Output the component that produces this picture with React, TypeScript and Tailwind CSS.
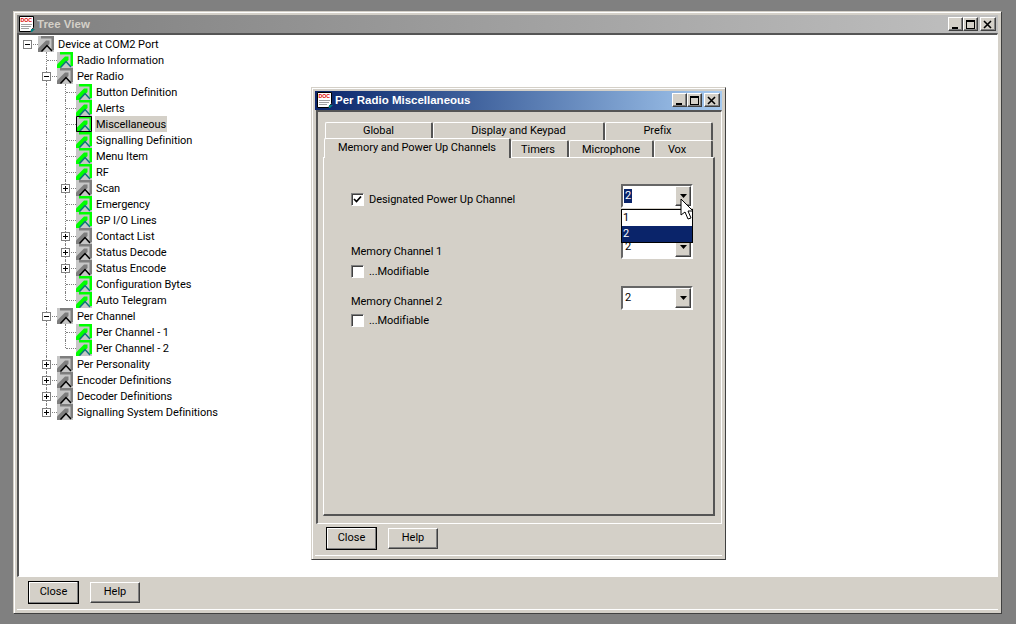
import type { ReactNode } from "react";

type Node = {
  label: string;
  depth: number;
  green?: boolean;
  toggle?: "+" | "-";
  selected?: boolean;
  // which levels keep a dotted line running through this row
  pipes?: number[];
  last?: boolean;
};

const R = [1];
const RR = [1, 2];

const TREE: Node[] = [
  { label: "Device at COM2 Port", depth: 0, toggle: "-" },
  { label: "Radio Information", depth: 1, green: true, pipes: R },
  { label: "Per Radio", depth: 1, toggle: "-", pipes: R },
  { label: "Button Definition", depth: 2, green: true, pipes: RR },
  { label: "Alerts", depth: 2, green: true, pipes: RR },
  { label: "Miscellaneous", depth: 2, green: true, selected: true, pipes: RR },
  { label: "Signalling Definition", depth: 2, green: true, pipes: RR },
  { label: "Menu Item", depth: 2, green: true, pipes: RR },
  { label: "RF", depth: 2, green: true, pipes: RR },
  { label: "Scan", depth: 2, toggle: "+", pipes: RR },
  { label: "Emergency", depth: 2, green: true, pipes: RR },
  { label: "GP I/O Lines", depth: 2, green: true, pipes: RR },
  { label: "Contact List", depth: 2, toggle: "+", pipes: RR },
  { label: "Status Decode", depth: 2, toggle: "+", pipes: RR },
  { label: "Status Encode", depth: 2, toggle: "+", pipes: RR },
  { label: "Configuration Bytes", depth: 2, green: true, pipes: RR },
  { label: "Auto Telegram", depth: 2, green: true, pipes: R, last: true },
  { label: "Per Channel", depth: 1, toggle: "-", pipes: R },
  { label: "Per Channel - 1", depth: 2, green: true, pipes: RR },
  { label: "Per Channel - 2", depth: 2, green: true, pipes: R, last: true },
  { label: "Per Personality", depth: 1, toggle: "+", pipes: R },
  { label: "Encoder Definitions", depth: 1, toggle: "+", pipes: R },
  { label: "Decoder Definitions", depth: 1, toggle: "+", pipes: R },
  { label: "Signalling System Definitions", depth: 1, toggle: "+", last: true },
];

function NodeIcon({ green, boxed }: { green?: boolean; boxed?: boolean }) {
  const band = green ? "#00ff00" : "#7e7e7e";
  return (
    <svg width="16" height="16" viewBox="0 0 16 16" className="block shrink-0">
      <path d="M0 0h16v16H0z" fill="#c6c6c6" />
      <path d="M3 0h13v14h-2.5V2.5H3z" fill={band} />
      <path d="M0 16v-3.5L8 4.5h3.5V8L3.5 16z" fill={band} />
      <path d="M3.5 15.5L9 9.5l5 5.5" fill="none" stroke={green ? "#107080" : "#000"} strokeWidth="1.5" />
      {boxed && <path d="M.5.5h15v15H.5z" fill="none" stroke="#000" />}
    </svg>
  );
}

function Expander({ sign }: { sign: "+" | "-" }) {
  return (
    <span className="absolute left-[4px] top-[4px] flex h-[9px] w-[9px] items-center justify-center border border-[#808080] bg-white">
      <span className="relative block h-[5px] w-[5px]">
        <span className="absolute left-0 top-[2px] h-px w-[5px] bg-black" />
        {sign === "+" && <span className="absolute left-[2px] top-0 h-[5px] w-px bg-black" />}
      </span>
    </span>
  );
}

function TreeRow({ node }: { node: Node }) {
  const { depth, pipes = [], last, toggle } = node;
  return (
    <div className="flex h-4 items-center">
      {[0, 1, 2].slice(0, depth + 1).map((level) => {
        const isOwn = level === depth;
        const through = pipes.includes(level) && !isOwn;
        const ownLine = isOwn && depth > 0;
        return (
          <div key={level} className="relative h-4 w-[19px] shrink-0">
            {through && <span className="absolute bottom-0 left-[8px] top-0 border-l border-dotted border-[#808080]" />}
            {ownLine && (
              <span
                className={`absolute left-[8px] top-0 border-l border-dotted border-[#808080] ${
                  last ? "h-[8px]" : "h-4"
                }`}
              />
            )}
            {isOwn && (
              <span className="absolute left-[9px] top-[8px] w-[10px] border-t border-dotted border-[#808080]" />
            )}
            {isOwn && toggle && <Expander sign={toggle} />}
          </div>
        );
      })}
      <NodeIcon green={node.green} boxed={node.selected} />
      <span
        className={`ml-[3px] h-4 px-px leading-[18px] tracking-[-0.05px] whitespace-nowrap ${
          node.selected ? "bg-[#d4d0c8]" : ""
        }`}
      >
        {node.label}
      </span>
    </div>
  );
}

function DocIcon() {
  return (
    <svg width="16" height="17" viewBox="0 0 16 17" className="block shrink-0">
      <path d="M.5.5h14v11l-3 4H.5z" fill="#fff" stroke="#000" />
      <text x="1.5" y="6" fontSize="5.2" fontWeight="700" fill="#e00000" fontFamily="Liberation Sans">
        DOC
      </text>
      <path d="M2 8.5h11M2 10.5h10M2 12.5h8" stroke="#a0a0a0" />
      <path d="M12 13h3.5v1h-1v1h-1v1H12z" fill="#008080" />
    </svg>
  );
}

function CaptionButton({ kind }: { kind: "min" | "max" | "close" }) {
  return (
    <span
      className={`flex h-[14px] items-center justify-center border border-t-white border-l-white border-b-[#404040] border-r-[#404040] bg-[#d4d0c8] shadow-[inset_-1px_-1px_0_#808080] ${
        kind === "close" ? "ml-[2px] w-4" : "w-[15px]"
      }`}
    >
      <svg width="10" height="9" viewBox="0 0 10 9" className="block" shapeRendering="crispEdges">
        {kind === "min" && <path d="M1 7h6v2H1z" fill="#000" />}
        {kind === "max" && <path d="M0 0h9v9H0zM1 2v6h7V2z" fill="#000" fillRule="evenodd" />}
        {kind === "close" && (
          <path d="M1 1l7 7M8 1l-7 7" stroke="#000" strokeWidth="1.6" fill="none" shapeRendering="auto" />
        )}
      </svg>
    </span>
  );
}

function TitleBar({ title, active }: { title: string; active?: boolean }) {
  return (
    <div
      className={`flex shrink-0 items-center pl-[2px] pr-[2px] ${
        active
          ? "h-[19px] bg-gradient-to-r from-[#0a246a] to-[#a6caf0] pb-px text-white"
          : "h-[18px] bg-gradient-to-r from-[#808080] to-[#c0c0c0] text-[#d4d0c8]"
      }`}
    >
      <DocIcon />
      <span
        className="ml-[2px] flex-1 truncate text-[11.5px] font-bold leading-4"
        style={{ fontFamily: '"Liberation Sans", sans-serif' }}
      >
        {title}
      </span>
      <div className="flex">
        <CaptionButton kind="min" />
        <CaptionButton kind="max" />
        <CaptionButton kind="close" />
      </div>
    </div>
  );
}

function WinButton({ label, isDefault }: { label: string; isDefault?: boolean }) {
  return (
    <button
      className={`flex items-center justify-center bg-[#d4d0c8] text-black ${
        isDefault
          ? "h-[23px] w-[51px] border border-black shadow-[inset_-1px_-1px_0_#808080,inset_1px_1px_0_#fff]"
          : "my-px h-[21px] w-[50px] border border-t-white border-l-white border-b-[#404040] border-r-[#404040] shadow-[inset_-1px_-1px_0_#808080]"
      }`}
    >
      {label}
    </button>
  );
}

function Tab({ label, className, active }: { label: string; className: string; active?: boolean }) {
  return (
    <div
      className={`flex items-center justify-center rounded-t-[2px] border-l border-t border-r-2 border-l-white border-t-white border-r-[#555555] bg-[#d4d0c8] tracking-[-0.05px] ${className} ${
        active ? "relative z-10 h-[20px] pb-px" : "h-[18px]"
      }`}
    >
      {label}
    </div>
  );
}

function Checkbox({ checked }: { checked?: boolean }) {
  return (
    <span className="flex h-[13px] w-[13px] shrink-0 items-center justify-center border border-t-[#808080] border-l-[#808080] border-b-white border-r-white bg-white shadow-[inset_1px_1px_0_#404040]">
      {checked && (
        <svg width="9" height="9" viewBox="0 0 9 9" className="block">
          <path d="M1 4l2.5 2.5L8 1.5" fill="none" stroke="#000" strokeWidth="1.7" />
        </svg>
      )}
    </span>
  );
}

function Combo({ value, selected }: { value: string; selected?: boolean }) {
  return (
    <div className="flex h-[24px] w-[72px] items-center justify-between border-2 border-t-[#666666] border-l-[#666666] border-b-white border-r-white bg-white pl-px">
      <span className={`px-px leading-[14px] ${selected ? "bg-[#0a246a] text-white" : ""}`}>{value}</span>
      <span className="flex h-[20px] w-[16px] items-center justify-center border border-t-white border-l-white border-b-[#404040] border-r-[#404040] bg-[#d4d0c8] shadow-[inset_-1px_-1px_0_#808080]">
        <svg width="7" height="4" viewBox="0 0 7 4" className="block">
          <path d="M0 0h7L3.5 4z" fill="#000" />
        </svg>
      </span>
    </div>
  );
}

function CheckRow({ checked, children }: { checked?: boolean; children: ReactNode }) {
  return (
    <div className="flex h-4 items-center gap-[5px]">
      <Checkbox checked={checked} />
      <span className="h-4 leading-[18px] tracking-[-0.05px]">{children}</span>
    </div>
  );
}

function PerRadioDialog() {
  return (
    <div className="absolute left-[311px] top-[87px] flex h-[473px] w-[415px] flex-col border border-t-[#d4d0c8] border-l-[#d4d0c8] border-b-[#404040] border-r-[#404040] bg-[#d4d0c8] p-[3px] shadow-[inset_1px_1px_0_#fff]">
      <TitleBar title="Per Radio Miscellaneous" active />
      <div className="ml-px h-[414px] border-t-2 border-l-2 border-t-[#555555] border-l-[#555555] border-b border-r border-b-white border-r-white pl-[5px] pt-[10px]">
        <div className="flex pl-[2px]">
          <Tab label="Global" className="w-[108px]" />
          <Tab label="Display and Keypad" className="w-[172px]" />
          <Tab label="Prefix" className="w-[108px] pr-[2px]" />
        </div>
        <div className="-mt-[2px] flex items-end pl-px">
          <Tab label="Memory and Power Up Channels" className="w-[187px]" active />
          <Tab label="Timers" className="w-[58px] pt-px pr-[3px]" />
          <Tab label="Microphone" className="w-[85px] pt-px" />
          <Tab label="Vox" className="w-[59px] pt-px pr-[12px]" />
        </div>
        <div className="relative -mt-px h-[359px] w-[392px] border-t border-l border-t-white border-l-white border-b-2 border-r-2 border-b-[#555555] border-r-[#555555] pl-[27px] pt-[33px]">
          <CheckRow checked>Designated Power Up Channel</CheckRow>
          <div className="mt-[36px] h-4 leading-[18px] tracking-[-0.05px]">Memory Channel 1</div>
          <div className="mt-[4px]">
            <CheckRow>...Modifiable</CheckRow>
          </div>
          <div className="mt-[14px] h-4 leading-[18px] tracking-[-0.05px]">Memory Channel 2</div>
          <div className="mt-[3px]">
            <CheckRow>...Modifiable</CheckRow>
          </div>

          <div className="absolute left-[297px] top-[26px]">
            <Combo value="2" selected />
          </div>
          <div className="absolute left-[297px] top-[77px]">
            <Combo value="2" />
          </div>
          <div className="absolute left-[297px] top-[128px]">
            <Combo value="2" />
          </div>
          {/* open drop-down list */}
          <div className="absolute left-[297px] top-[51px] z-20 w-[72px] border border-black bg-white">
            <div className="h-4 pl-px leading-4">1</div>
            <div className="h-4 bg-[#0a246a] pl-px leading-4 text-white">2</div>
          </div>
          {/* mouse pointer */}
          <svg width="14" height="22" viewBox="0 0 14 22" className="absolute left-[356px] top-[40px] z-30 block">
            <path d="M1 1v16l4-3 3 7 3-1-3-7h5z" fill="#fff" stroke="#000" strokeWidth="1" />
          </svg>
        </div>
      </div>
      <div className="flex gap-[11px] pl-[11px] pt-[3px]">
        <WinButton label="Close" isDefault />
        <WinButton label="Help" />
      </div>
      <div className="mt-auto h-px bg-white" />
    </div>
  );
}

export default function App() {
  return (
    <div
      className="relative h-[624px] w-[1016px] overflow-hidden bg-[#808080] pl-[13px] pt-[11px] text-[11px] text-black"
      style={{ fontFamily: 'Roboto, "Liberation Sans", sans-serif' }}
    >
      <div className="flex h-[603px] w-[989px] flex-col border border-t-[#d4d0c8] border-l-[#d4d0c8] border-b-[#404040] border-r-[#404040] bg-[#d4d0c8] p-[3px] shadow-[inset_1px_1px_0_#fff]">
        <TitleBar title="Tree View" />
        <div className="h-[544px] shrink-0 border-t-2 border-l-2 border-t-[#555555] border-l-[#555555] border-b border-r border-b-white border-r-white bg-white pt-px">
          {TREE.map((node) => (
            <TreeRow key={node.label} node={node} />
          ))}
        </div>
        <div className="flex gap-[11px] pl-[11px] pt-[4px]">
          <WinButton label="Close" isDefault />
          <WinButton label="Help" />
        </div>
        <div className="mt-auto h-px bg-white" />
      </div>
      <PerRadioDialog />
    </div>
  );
}
